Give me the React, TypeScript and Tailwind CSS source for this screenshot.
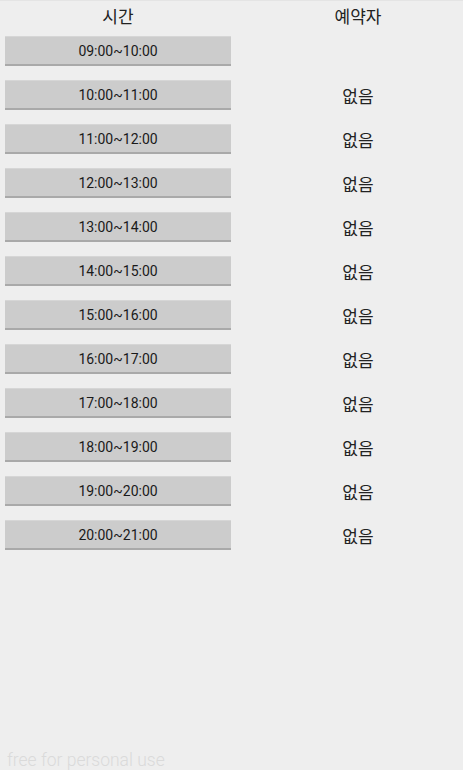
import React from "react";

const slots = [
  "09:00~10:00",
  "10:00~11:00",
  "11:00~12:00",
  "12:00~13:00",
  "13:00~14:00",
  "14:00~15:00",
  "15:00~16:00",
  "16:00~17:00",
  "17:00~18:00",
  "18:00~19:00",
  "19:00~20:00",
  "20:00~21:00",
];

export default function App() {
  return (
    <div
      className="relative w-[463px] h-[770px] bg-[#eeeeee] overflow-hidden border-t border-[#e4e4e4]"
      style={{ fontFamily: "Roboto, 'Noto Sans CJK KR', sans-serif" }}
    >
      <div className="flex h-[29px] items-center text-[17px] text-[#222222]" style={{ fontFamily: "'Noto Sans CJK KR', sans-serif" }}>
        <div className="w-[236px] text-center">시간</div>
        <div className="flex-1 pl-[17px] text-center">예약자</div>
      </div>
      {slots.map((s, i) => (
        <div key={s} className="flex h-[44px]">
          <div className="w-[236px] pt-[6px] pl-[5px]">
            <div className="w-[226px] h-[30px] pt-[2px] bg-[#cccccc] border-t border-[#d6d6d6] border-b-2 border-b-[#a9a9a9] flex items-center justify-center text-[14px] text-[#1a1a1a]">
              {s}
            </div>
          </div>
          <div
            className="flex-1 pl-[17px] flex items-center justify-center text-[17px] text-[#222222]"
            style={{ fontFamily: "'Noto Sans CJK KR', sans-serif" }}
          >
            {i === 0 ? "" : "없음"}
          </div>
        </div>
      ))}
      <div className="absolute left-[7px] bottom-[1px] text-[17.5px] font-light text-[#dadada] leading-none">
        free for personal use
      </div>
    </div>
  );
}
